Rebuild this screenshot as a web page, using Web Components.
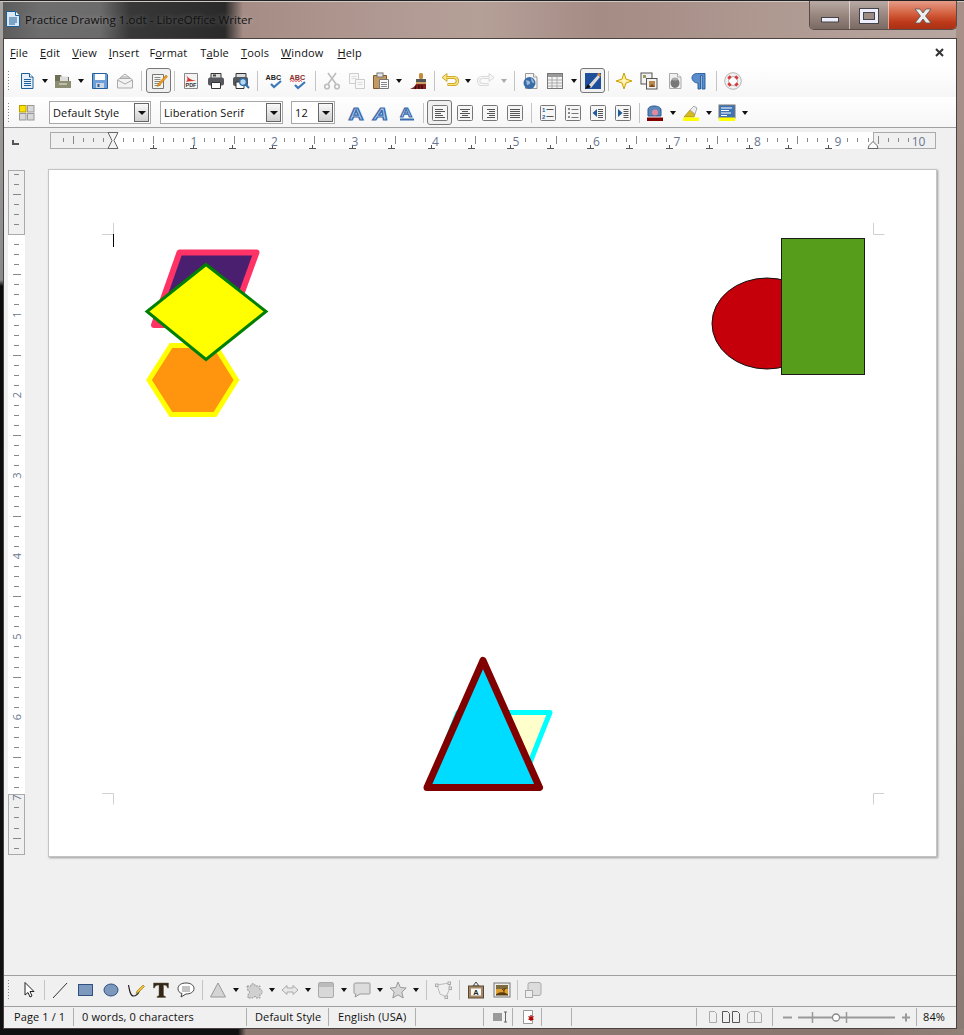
<!DOCTYPE html>
<html>
<head>
<meta charset="utf-8">
<title>Practice Drawing 1.odt - LibreOffice Writer</title>
<style>
  html, body { margin: 0; padding: 0; }
  body { font-family: "Open Sans", "Liberation Sans", sans-serif; }
</style>
</head>
<body>
<app-window title-text="Practice Drawing 1.odt - LibreOffice Writer">
  <menu-bar>
    <span><u>F</u>ile</span><span><u>E</u>dit</span><span><u>V</u>iew</span><span><u>I</u>nsert</span><span>F<u>o</u>rmat</span><span>T<u>a</u>ble</span><span><u>T</u>ools</span><span><u>W</u>indow</span><span><u>H</u>elp</span>
  </menu-bar>
  <tool-bar style="height:31px;padding-bottom:2px">
    <tool-btn icon="new" w="24"></tool-btn><tool-arrow></tool-arrow>
    <tool-btn icon="open" w="24"></tool-btn><tool-arrow></tool-arrow>
    <tool-btn icon="save"></tool-btn><tool-btn icon="mail"></tool-btn>
    <tool-sep w="9"></tool-sep>
    <tool-btn icon="edit" on></tool-btn>
    <tool-sep w="7"></tool-sep>
    <tool-btn icon="pdf"></tool-btn><tool-btn icon="print"></tool-btn><tool-btn icon="preview"></tool-btn>
    <tool-sep w="9"></tool-sep>
    <tool-btn icon="spell" w="24"></tool-btn><tool-btn icon="spell2" w="24"></tool-btn>
    <tool-sep w="10"></tool-sep>
    <tool-btn icon="cut" w="24"></tool-btn><tool-btn icon="copy"></tool-btn><tool-btn icon="paste" w="24"></tool-btn><tool-arrow></tool-arrow>
    <tool-btn icon="brush"></tool-btn>
    <tool-sep w="8"></tool-sep>
    <tool-btn icon="undo" w="24"></tool-btn><tool-arrow></tool-arrow>
    <tool-btn icon="redo" w="24"></tool-btn><tool-arrow off></tool-arrow>
    <tool-sep w="9"></tool-sep>
    <tool-btn icon="globe" w="24"></tool-btn><tool-btn icon="table" w="24"></tool-btn><tool-arrow w="13"></tool-arrow>
    <tool-btn icon="draw" on></tool-btn>
    <tool-sep w="7"></tool-sep>
    <tool-btn icon="star4" w="24"></tool-btn><tool-btn icon="nav" w="26"></tool-btn><tool-btn icon="gallery"></tool-btn><tool-btn icon="pilcrow" w="24"></tool-btn>
    <tool-sep w="10"></tool-sep>
    <tool-btn icon="help" w="24"></tool-btn>
  </tool-bar>
  <tool-bar style="height:30px;padding-top:1px">
    <tool-btn icon="styles" w="24"></tool-btn>
    <font-combo w="102" style="margin:0 9px 0 10px">Default Style</font-combo>
    <font-combo w="123" style="margin-right:8px">Liberation Serif</font-combo>
    <font-combo w="44" style="margin-right:10px">12</font-combo>
    <tool-btn icon="bold" w="24"></tool-btn><tool-btn icon="italic"></tool-btn><tool-btn icon="under"></tool-btn>
    <tool-sep w="8"></tool-sep>
    <tool-btn icon="alignl" on></tool-btn><tool-btn icon="alignc"></tool-btn><tool-btn icon="alignr"></tool-btn><tool-btn icon="alignj"></tool-btn>
    <tool-sep w="8"></tool-sep>
    <tool-btn icon="numbered"></tool-btn><tool-btn icon="bullets"></tool-btn><tool-btn icon="outdent"></tool-btn><tool-btn icon="indent"></tool-btn>
    <tool-sep w="8"></tool-sep>
    <tool-btn icon="fontcolor" w="24"></tool-btn><tool-arrow></tool-arrow>
    <tool-btn icon="highlight" w="24"></tool-btn><tool-arrow></tool-arrow>
    <tool-btn icon="parabg" w="24"></tool-btn><tool-arrow></tool-arrow>
  </tool-bar>
  <ruler-row></ruler-row>
  <doc-area>
    <v-ruler></v-ruler>
    <doc-page></doc-page>
  </doc-area>
  <tool-bar style="height:31px;padding-bottom:2px;background:#f0f0f0;border-bottom:1px solid #a0a0a0">
    <tool-btn icon="select" w="27"></tool-btn>
    <tool-sep w="5"></tool-sep>
    <tool-btn icon="line" w="26"></tool-btn><tool-btn icon="rect"></tool-btn><tool-btn icon="ellipse"></tool-btn><tool-btn icon="curve"></tool-btn><tool-btn icon="textT"></tool-btn><tool-btn icon="note"></tool-btn>
    <tool-sep w="8"></tool-sep>
    <tool-btn icon="tri" w="23"></tool-btn><tool-arrow w="13"></tool-arrow>
    <tool-btn icon="puzzle" w="23"></tool-btn><tool-arrow w="13"></tool-arrow>
    <tool-btn icon="dblarrow" w="24"></tool-btn><tool-arrow></tool-arrow>
    <tool-btn icon="flow" w="24"></tool-btn><tool-arrow></tool-arrow>
    <tool-btn icon="bubble" w="24"></tool-btn><tool-arrow></tool-arrow>
    <tool-btn icon="star5" w="23"></tool-btn><tool-arrow w="13"></tool-arrow>
    <tool-sep w="8"></tool-sep>
    <tool-btn icon="points" w="26"></tool-btn>
    <tool-sep w="6"></tool-sep>
    <tool-btn icon="fontwork" w="27"></tool-btn><tool-btn icon="image"></tool-btn>
    <tool-sep w="6"></tool-sep>
    <tool-btn icon="extrude" w="26"></tool-btn>
  </tool-bar>
  <status-bar>
    <status-cell w="70" pad="10">Page 1 / 1</status-cell>
    <status-cell w="173" pad="8">0 words, 0 characters</status-cell>
    <status-cell w="82" pad="8">Default Style</status-cell>
    <status-cell w="87" pad="9">English (USA)</status-cell>
    <status-cell w="68"></status-cell>
    <status-cell w="29" pad="9"><tool-glyph icon="sel"></tool-glyph></status-cell>
    <status-cell w="29" pad="9"><tool-glyph icon="docstar"></tool-glyph></status-cell>
    <status-cell w="30"></status-cell>
    <status-cell w="125"></status-cell>
    <status-cell w="76" pad="11"><tool-glyph icon="views" size="58"></tool-glyph></status-cell>
    <status-cell w="144" pad="9"><zoom-slider></zoom-slider></status-cell>
    <status-cell pad="6" last>84%</status-cell>
  </status-bar>
</app-window>

<script>
// small drawings for the toolbar buttons, all on an 18x18 box
const page = (f, s) => `<path d="M3.5 1.5h8l3.5 3.5v11.5h-11.5z" fill="${f}" stroke="${s}"/><path d="M11.5 1.5v3.5h3.5" fill="#fff" stroke="${s}"/>`
const lines = (x, w, ys, c) => ys.map(y => `<path d="M${x} ${y}h${w}" stroke="${c}"/>`).join('')
const framed = inner => `<rect x="1.5" y="1.5" width="15" height="15" rx="1" fill="#f6f6f6" stroke="#777"/>${inner}`
const svgText = (t, x, y, size, fill, extra = '') => `<text x="${x}" y="${y}" font-family="Liberation Sans, sans-serif" font-size="${size}" font-weight="700" fill="${fill}" ${extra}>${t}</text>`
const bentArrow = (edge, body) => `<path d="M6 5.500h7c4.500 0 4.500 7 0 7H6.500" fill="none" stroke="${edge}" stroke-width="3.200"/><path d="M6 1.500L1 5.500l5 4z" fill="${body}" stroke="${edge}" stroke-width=".8"/><path d="M6 5.500h7c4.500 0 4.500 7 0 7H7" fill="none" stroke="${body}" stroke-width="1.600"/>`

const ICONS = {
  new: page('#e6f0fa', '#1c5f98') + lines(6, 7, [7.5, 9.5, 11.5, 13.5], '#1c5f98'),
  open: '<path d="M1 3h6l1 2h7v4H1z" fill="#6f6f58"/><path d="M1 9h16v7H1z" fill="#8d8d74"/><path d="M6 4.500h8v4.500H6z" fill="#ddd"/><path d="M5 11h8v2H5z" fill="#bdbda8"/>',
  save: '<path d="M1.5 1.5h14l1 1v14h-15z" fill="#6f9fd8" stroke="#26609c"/><path d="M4 2h10v6H4z" fill="#fff"/><path d="M5 11h8v5H5z" fill="#cfd8e2"/><path d="M6.5 12h2v3h-2z" fill="#26609c"/>',
  mail: '<path d="M1.5 8L9 2l7.5 6v8h-15z" fill="#f2f2f2" stroke="#aaa"/><path d="M1.5 8L9 12l7.5-4M4 6.5h10M5 5h8" fill="none" stroke="#aaa"/>',
  edit: '<path d="M2.5 2.5h11v14h-11z" fill="#f4f4ee" stroke="#777"/>' + lines(4.5, 6, [5.5, 7.5, 9.5, 11.5, 13.5], '#888') + '<path d="M8 12l8-9 1.5 1.5-8 9-2.5 1z" fill="#f09a1a" stroke="#b06c00" stroke-width=".5"/>',
  pdf: '<path d="M2.5 1.5h13v15h-13z" fill="#f4f4f4" stroke="#888"/><path d="M4 3c3 4 6 5 10 6-4 0-7 0-10 1 2-2 2-4 0-7z" fill="#d9362a"/>' + svgText('PDF', 3.6, 15, 5.4, '#333'),
  print: '<path d="M4 1.5h10v5H4z" fill="#ddd" stroke="#333"/><rect x="1" y="5.5" width="16" height="8" rx="2" fill="#55585c"/><path d="M4.500 10.500h9v6h-9z" fill="#fff" stroke="#333"/><path d="M6 2.500h3v2H6z" fill="#444"/>',
  preview: '<path d="M4 1.500h10v5H4z" fill="#ddd" stroke="#333"/><rect x="1" y="5" width="15" height="9" rx="2" fill="#55585c"/><path d="M4 10h8v6.500H4z" fill="#fff" stroke="#333"/><circle cx="11" cy="10" r="3.300" fill="#b8d8f2" stroke="#2a70b0" stroke-width="1.300"/><path d="M13.500 12.500l3.500 3.500" stroke="#2a70b0" stroke-width="2"/>',
  spell: svgText('ABC', 0.5, 7.5, 7.2, '#222') + '<path d="M6 12l3 3 7-6" fill="none" stroke="#3c78b8" stroke-width="2.200"/>',
  spell2: svgText('ABC', 0.5, 7.5, 7.2, '#8a2a2a') + '<path d="M1 9.500l1.500-1 1.500 1 1.500-1 1.500 1 1.500-1 1.500 1 1.500-1 1.500 1" fill="none" stroke="#c22"  stroke-width=".8"/><path d="M6 13l3 3 7-6" fill="none" stroke="#3c78b8" stroke-width="2.200"/>',
  cut: '<g fill="none" stroke="#bdbdbd" stroke-width="1.600"><path d="M5 1l8 11M13 1L5 12"/><circle cx="4" cy="14.500" r="2.300"/><circle cx="14" cy="14.500" r="2.300"/></g>',
  copy: '<path d="M1.500 1.500h9v10h-9z" fill="#f8f8f8" stroke="#ccc"/><path d="M7.500 7.500h9v9h-9z" fill="#f8f8f8" stroke="#ccc"/>' + lines(3.500, 5, [4.500, 6.500], '#ddd') + lines(9.500, 5, [10.500, 12.500], '#ddd'),
  paste: '<path d="M1.500 3.500h13v13h-13z" fill="#c49a63" stroke="#80592a"/><rect x="5" y="1" width="6" height="4" fill="#e6e6e6" stroke="#777"/><path d="M7.500 7.500h9v9h-9z" fill="#fafafa" stroke="#777"/>' + lines(9, 6, [10.500, 12.500, 14.500], '#888'),
  brush: '<rect x="10" y="1" width="4" height="6" rx="1.500" fill="#c48a38"/><path d="M7 7h10v3H7z" fill="#555"/><path d="M7 10h10v2H7z" fill="#c9a066"/><path d="M1 17c3-1 5-3 6-5h10v5z" fill="#8c1e1e"/><path d="M7 14l-1 3M10 13v4M13 13v4" stroke="#111" stroke-width="1.200"/>',
  undo: bentArrow('#c09a10', '#fbe27a'),
  redo: `<g transform="translate(18 0) scale(-1 1)">${bentArrow('#cfcfcf', '#f8f8f8')}</g>`,
  globe: page('#f6f6f6', '#999') + '<circle cx="7.500" cy="11" r="6" fill="#3a6ea8"/><path d="M4 8c2 1 3 0 4 2s-2 3-3 3zM9 6c2 1 3 3 3 5-2 0-3-2-3-5z" fill="#9db9d8"/>',
  table: '<rect x="1.500" y="1.500" width="15" height="15" fill="#f4f4f4" stroke="#777"/><path d="M2 2h14v3H2z" fill="#9a9a9a"/><path d="M2 8h14M2 11h14M2 14h14M6 5v11M11 5v11" stroke="#aaa"/>',
  draw: '<rect x="1" y="1" width="16" height="16" fill="#1e4f9a"/><path d="M4 14L14 3l2 2L7 16z" fill="#dcdcdc"/><path d="M13 2l3 3 1-2-2-2z" fill="#d98a30"/><path d="M1 17l3-5 3 3z" fill="#111"/>',
  star4: '<path d="M9 1l2 6 6 2-6 2-2 6-2-6-6-2 6-2z" fill="#fbe690" stroke="#d0a400"/><path d="M9 5l1 3 3 1-3 1-1 3-1-3-3-1 3-1z" fill="#fff6c8"/>',
  nav: '<rect x="1" y="1" width="11" height="11" fill="#f2f2f2" stroke="#555"/><rect x="3" y="3" width="3" height="3" fill="#9a9a60"/><rect x="6.500" y="6.500" width="10.500" height="10.500" fill="#f2f2f2" stroke="#555"/><rect x="9" y="9" width="6" height="6" fill="#b88a50"/><path d="M9 15l3-3 3 3z" fill="#7c4a20"/>',
  gallery: page('#f0f0f0', '#aaa') + '<ellipse cx="9" cy="11" rx="4.500" ry="5" fill="#777"/><ellipse cx="9" cy="7" rx="3" ry="1.500" fill="#aaa"/>',
  pilcrow: '<path d="M15 1.500H7.500C3 1.500 2 4 2 6s2 5 6 5v6h2.500V3.500H12V17h3z" fill="#5b8ccb" stroke="#1f5a9c" stroke-width=".9"/>',
  help: '<circle cx="9" cy="9" r="6.500" fill="none" stroke="#f2f2f2" stroke-width="4"/><circle cx="9" cy="9" r="8.300" fill="none" stroke="#999" stroke-width=".7"/><circle cx="9" cy="9" r="4.500" fill="#fff" stroke="#999" stroke-width=".7"/><g stroke="#d83a3a" stroke-width="3.500"><path d="M4.500 4.500l2 2M13.500 4.500l-2 2M4.500 13.500l2-2M13.500 13.500l-2-2"/></g>',
  styles: '<rect x="1.500" y="1.500" width="6.500" height="6.500" fill="#fbe000" stroke="#b89c00"/><rect x="9.500" y="1.500" width="6.500" height="6.500" fill="#d8d8d8" stroke="#999"/><rect x="1.500" y="9.500" width="6.500" height="6.500" fill="#d8d8d8" stroke="#999"/><rect x="9.500" y="9.500" width="6.500" height="6.500" fill="#d8d8d8" stroke="#999"/>',
  bold: svgText('A', 0, 0, 16, '#b8cfec', 'stroke="#3a6cb0" stroke-width="1.200" transform="translate(0.500 15.500) scale(1.300 1)"'),
  italic: svgText('A', 0, 0, 16, '#b8cfec', 'stroke="#3a6cb0" stroke-width="1.200" font-style="italic" transform="translate(0 15.500) scale(1.300 1)"'),
  under: svgText('A', 0, 0, 13, '#f2f6fb', 'stroke="#3a6cb0" stroke-width="1" transform="translate(2 12.500) scale(1.300 1)"') + '<path d="M2 15.500h14" stroke="#3a6cb0" stroke-width="2"/>',
  alignl: framed(lines(4, 8, [5.500, 11.500], '#555') + lines(4, 10, [7.500, 13.500], '#555') + lines(4, 6, [9.500], '#555')),
  alignc: framed(lines(4, 10, [5.500, 9.500, 13.500], '#555') + lines(6, 6, [7.500, 11.500], '#555')),
  alignr: framed(lines(6, 8, [5.500, 9.500, 13.500], '#555') + lines(8, 6, [7.500, 11.500], '#555')),
  alignj: framed(lines(4, 10, [5.500, 7.500, 9.500, 11.500, 13.500], '#555')),
  numbered: framed(svgText('1', 3, 8, 6, '#2a5ea0') + svgText('2', 3, 14.500, 6, '#2a5ea0') + lines(7.500, 7, [5.500, 12.500], '#555')),
  bullets: framed('<path d="M4 4h2v2H4zM4 8h2v2H4zM4 12h2v2H4z" fill="#888"/>' + lines(7.500, 7, [5.500, 9.500, 13.500], '#777')),
  outdent: framed('<path d="M8 5v8L3.500 9z" fill="#1f5a9c"/>' + lines(9, 5, [5.500, 7.500, 9.500, 11.500, 13.500], '#555')),
  indent: framed('<path d="M4 5v8l4.500-4z" fill="#1f5a9c"/>' + lines(9.500, 5, [5.500, 7.500, 9.500, 11.500, 13.500], '#555')),
  fontcolor: '<path d="M2 12V6c0-3 3-4 6-4s7 1 7 4v6z" fill="#5c86b8" stroke="#2a5a94"/><circle cx="9" cy="8.500" r="3" fill="#e08aa0"/><path d="M1 13.500h16V17H1z" fill="#800000"/>',
  highlight: '<path d="M2 13l6-7 5 4-1 3z" fill="#d8b820" stroke="#a88c00" stroke-width=".7"/><path d="M8 6l4-4 3 2-2 6z" fill="#eee" stroke="#aaa"/><path d="M1 13.500h16V17H1z" fill="#ffff00"/>',
  parabg: '<rect x="1" y="1" width="16" height="13" fill="#3f74b4" stroke="#777"/><path d="M3 4h11M3 6.500h8M3 9h10M3 11.500h6" stroke="#fff"/><path d="M1 13.500h16V17H1z" fill="#ffff00"/>',
  select: '<path d="M5 1.500v12.500l3-2.500 2 4.500 2-1-2-4.500h4z" fill="#fff" stroke="#222"/>',
  line: '<path d="M2 17L16 2" stroke="#333"/>',
  rect: '<rect x="1.500" y="3.500" width="14" height="11" fill="#7c98bd" stroke="#2f5080"/>',
  ellipse: '<ellipse cx="9" cy="9" rx="7" ry="6" fill="#7c98bd" stroke="#2f5080"/>',
  curve: '<path d="M1.500 4c1 6 2 11 5 11s5-3 6-5" fill="none" stroke="#222" stroke-width="1.200"/><path d="M10 10l6-6 1.500 1.500-6 6-2.500 1z" fill="#f0c030" stroke="#7a5a00" stroke-width=".5"/>',
  textT: '<path d="M1.500 2h15v5h-1c-.5-2-1-3-4-3v10c0 1 1 1 2 1.500v1H5v-1c1-.5 2-.5 2-1.500V4C4 4 3 5 2.500 7h-1z" fill="#30261a" stroke="#6b5a34" stroke-width=".5"/>',
  note: '<path d="M9 2c4.500 0 8 2 8 5.500S13.500 13 9 13l-5 3 1-3.500C2.500 12 1 10 1 7.500 1 4 4.500 2 9 2z" fill="#fff" stroke="#444"/>' + lines(5, 8, [6, 8, 10], '#888'),
  tri: '<path d="M9 2l7.500 14h-15z" fill="#d4d4d4" stroke="#999"/>',
  puzzle: '<path d="M2 5h4c-1-3 5-3 4 0h5v4c3-1 3 5 0 4v4h-4c1-2-3-2-3 0H3v-4c2 1 2-4 0-3z" fill="#d0d0d0" stroke="#999" stroke-dasharray="2 1"/>',
  dblarrow: '<path d="M1 9l5-4.500V7h6V4.500L17 9l-5 4.500V11H6v2.500z" fill="#e8e8e8" stroke="#aaa"/>',
  flow: '<rect x="1.500" y="1.500" width="15" height="15" rx="1.500" fill="#d8d8d8" stroke="#aaa"/><path d="M2 2h14v4H2z" fill="#bbb"/>',
  bubble: '<path d="M3 2h13c1 0 1 .5 1 1v9c0 1-.5 1-1 1H7l-5 3 1-3c-1 0-2-.5-2-1V3c0-.5 1-1 2-1z" fill="#dcdcdc" stroke="#999"/>',
  star5: '<path d="M9 1l2.400 5.500 5.800.5-4.400 4 1.400 6L9 13.800 3.800 17l1.400-6L1 7l5.800-.5z" fill="#d8d8d8" stroke="#999"/>',
  points: '<path d="M3 4l12-2 1 5-4 9-6-3z" fill="none" stroke="#bbb"/><g fill="#f0f0f0" stroke="#aaa"><rect x="1.500" y="3" width="2.500" height="2.500"/><rect x="14" y="1" width="2.500" height="2.500"/><rect x="15" y="6" width="2.500" height="2.500"/><rect x="11" y="15" width="2.500" height="2.500"/></g>',
  fontwork: '<path d="M9 1L6 5h6z" fill="none" stroke="#444"/><rect x="1.500" y="5" width="15" height="12" fill="#a48a68" stroke="#5a4630"/><rect x="4" y="7.500" width="10" height="7" fill="#f8f8f8"/>' + svgText('A', 6.200, 13.800, 7.500, '#222'),
  image: '<rect x="1" y="2" width="16" height="14" fill="#eee" stroke="#777"/><path d="M3 4h12v10H3z" fill="#e0a030"/><path d="M3 4h12v4H3z" fill="#554" opacity=".7"/><path d="M3 14c3-3 8-3 12 0zM11 14V7M11 9l2-2M11 10L9 8" stroke="#5a3a10" fill="#5a3a10"/>',
  extrude: '<rect x="4" y="1.500" width="13" height="13" rx="2" fill="#dcdcdc" stroke="#aaa"/><rect x="1.500" y="9.500" width="7" height="7" fill="#eee" stroke="#aaa"/>',
  sel: '<path d="M0 5h9v8H0z" fill="#9a9a9a"/><path d="M11 4h3M11 14h3M12.500 4v10" stroke="#666"/>',
  docstar: '<path d="M1.500 2.500h9v13h-9z" fill="#fff" stroke="#999"/><path d="M9 7v6M6.500 8.500l5 3M11.500 8.500l-5 3" stroke="#b00000" stroke-width="1.300"/>',
  views: '<g fill="none" stroke-width="1"><path d="M1.500 3.500h5l2 2v9h-7z" stroke="#aaa"/><path d="M14.500 3.500h5l2 2v9h-7z" stroke="#555"/><path d="M24.500 3.500h5l2 2v9h-7z" stroke="#555"/><path d="M39.500 5.500l3-2h4v11h-7zM46.500 3.500h4l3 2v9h-7z" stroke="#aaa"/></g>'
}

const swatch = (name, size) => `<svg width="${size}" height="18" viewBox="0 0 ${size} 18" style="display:block">${ICONS[name] || ''}</svg>`

const shapeEl = (tag, css, build) => {
  customElements.define(tag, class extends HTMLElement {
    constructor() {
      super()
      this.attachShadow({ mode: 'open' })
    }
    connectedCallback() {
      this.shadowRoot.innerHTML = `<style>${css}</style>${build(this)}`
    }
  })
}

shapeEl('app-window', `
  :host {
    display: block; position: relative; height: 1035px; width: 964px; overflow: hidden; box-sizing: border-box;
    padding: 38px 7px 6px 3px;
    background:
      linear-gradient(#222 0 1px, #cfc8c4 1px 2px, transparent 2px) top/100% 3px no-repeat,
      linear-gradient(90deg, #111 0 238px, #8b7770 246px 870px, #8f8078 100%) bottom/100% 6px no-repeat,
      linear-gradient(#a8a4a2 0, #8a8a8a 280px, #0c0c0c 286px, #101010 100%) left/3px 100% no-repeat,
      linear-gradient(#a89088, #9b8c86 40%, #8a7a74) right/8px 100% no-repeat,
      linear-gradient(90deg, #5a5a5a 0, #6e6e6e 40px, #6b6b6b 100px, #383838 130px, #2a2a2a 225px, #a58d86 243px, #ad958e 330px, #b5a098 480px, #a58c85 600px, #ae9890 760px, #b8a8a2 964px);
  }
  .title { position: absolute; left: 0; right: 0; top: 0; height: 38px; display: flex; align-items: flex-start; }
  .title svg.doc { margin: 10px 4px 0 5px; }
  .name { margin-top: 11px; font-size: 11.6px; line-height: 18px; color: #111; text-shadow: 0 0 6px rgba(255,255,255,.35); white-space: nowrap; }
  .caption { margin: 1px 7px 0 auto; display: flex; height: 28px; border: 1px solid #5a4c48; border-top: 0; border-radius: 0 0 5px 5px; overflow: hidden; }
  .caption div { display: flex; align-items: center; justify-content: center; border-left: 1px solid rgba(255,255,255,.55); background: linear-gradient(#b9aaa5, #98877f 50%, #7a6a64); }
  .caption div:first-child { border-left: 0; align-items: flex-end; padding-bottom: 6px; box-sizing: border-box; }
  .caption svg { margin-top: 2px; }
  .caption .close { background: linear-gradient(#e59c88, #d3603f 45%, #bd3a1a 75%, #a93015); }
  .body { height: 100%; display: flex; flex-direction: column; box-sizing: border-box; background: #f0f0f0; border: 1px solid #4a4240; }
`, el => `
  <div class="title">
    <svg class="doc" width="16" height="18" viewBox="0 0 16 18"><path d="M1.500 1.500h9l4 4v11h-13z" fill="#dbe9f6" stroke="#1c5f98"/><path d="M10.500 1.500v4h4" fill="#fff" stroke="#1c5f98"/><path d="M4 8h8M4 10h8M4 12h8M4 14h6" stroke="#1c5f98"/></svg>
    <div class="name">${el.getAttribute('title-text')}</div>
    <div class="caption">
      <div style="width:39px"><svg width="18" height="6"><rect x=".5" y=".5" width="17" height="4.500" fill="#eef" stroke="#444"/></svg></div>
      <div style="width:38px"><svg width="20" height="16"><rect x=".5" y=".5" width="19" height="15" fill="#eef" stroke="#444"/><rect x="4.500" y="4.500" width="11" height="7" fill="#9a8a84" stroke="#444"/></svg></div>
      <div class="close" style="width:67px"><svg width="18" height="16"><path d="M1 1h5l3 4 3-4h5l-5.500 7 5.500 7h-5l-3-4-3 4H1l5.500-7z" fill="#eee" stroke="#555" stroke-width=".8"/></svg></div>
    </div>
  </div>
  <div class="body"><slot></slot></div>
`)

shapeEl('menu-bar', `
  :host { display: flex; align-items: center; height: 27px; box-sizing: border-box; padding: 0 6px 1px 6px; flex: none; font-size: 11px; color: #111; background: #fff; letter-spacing: .15px; position: relative; }
  ::slotted(span) { margin-right: 12px; }
  ::slotted(span:nth-child(4)) { margin-right: 10px; }
  ::slotted(span:nth-child(5)) { margin-right: 13px; }
  ::slotted(span:nth-child(8)) { margin-right: 14px; }
  .x { margin-left: auto; margin-right: 6px; }
`, () => `<slot></slot><svg class="x" width="9" height="9"><path d="M1 1l7 7M8 1L1 8" stroke="#333" stroke-width="2"/></svg>`)

shapeEl('tool-bar', `
  :host { display: flex; align-items: center; flex: none; background: linear-gradient(#fff, #f6f6f6); box-sizing: border-box; }
  .grip { width: 11px; height: 22px; flex: none; background: radial-gradient(circle, #888 .7px, transparent 1px) 3px 0/3px 3px repeat-y; }
`, () => `<div class="grip"></div><slot></slot>`)

shapeEl('tool-btn', `
  :host { display: flex; align-items: center; justify-content: center; flex: none; height: 25px; box-sizing: border-box; }
  :host([on]) { border: 1px solid #777; border-radius: 3px; background: #f0f0f0; box-shadow: inset 0 0 1px #fff; }
  svg { overflow: visible; }
`, el => {
  el.style.width = (el.getAttribute('w') || 25) + 'px'
  return swatch(el.getAttribute('icon'), 18)
})

shapeEl('tool-glyph', `:host { display: block; } svg { overflow: visible; }`, el => swatch(el.getAttribute('icon'), el.getAttribute('size') || 18))

shapeEl('tool-arrow', `
  :host { display: flex; align-items: center; justify-content: center; flex: none; }
  i { width: 0; height: 0; border: 3.5px solid transparent; border-top: 4px solid #111; border-bottom: 0; }
  :host([off]) i { border-top-color: #aaa; }
`, el => {
  el.style.width = (el.getAttribute('w') || 12) + 'px'
  return '<i></i>'
})

shapeEl('tool-sep', `
  :host { display: flex; justify-content: center; flex: none; height: 20px; }
  i { width: 1px; background: #c4c4c4; }
`, el => {
  el.style.width = el.getAttribute('w') + 'px'
  return '<i></i>'
})

shapeEl('font-combo', `
  :host { display: flex; flex: none; height: 23px; box-sizing: border-box; border: 1px solid #a8a8a8; background: #fff; font-size: 11px; color: #111; letter-spacing: .12px; }
  .txt { flex: 1; padding-left: 3px; line-height: 21px; white-space: nowrap; overflow: hidden; }
  .btn { width: 15px; margin: 1px; border: 1px solid #666; background: linear-gradient(#fafafa, #cfcfcf); display: flex; align-items: center; justify-content: center; box-sizing: border-box; }
  i { width: 0; height: 0; border: 4px solid transparent; border-top: 4px solid #111; border-bottom: 0; }
`, el => {
  el.style.width = el.getAttribute('w') + 'px'
  return `<div class="txt"><slot></slot></div><div class="btn"><i></i></div>`
})

shapeEl('ruler-row', `
  :host { display: block; flex: none; height: 24px; background: #f0f0f0; border-top: 1px solid #a0a0a0; box-sizing: border-box; }
  svg { display: block; }
`, () => {
  // zero of the ruler sits on the left page margin, 80.5px to the inch
  let t = ''
  for (let i = -6; i <= 80; i++) {
    const x = 109 + i * 10.06
    if (x < 50 || x > 930 || i % 8 === 0) continue
    const tall = i % 4 === 0
    t += `<path d="M${Math.round(x) + .5} ${tall ? 8 : 10}v${tall ? 8 : 4}" stroke="#888"/>`
  }
  let stops = ''
  for (let i = 0; i < 18; i++) {
    const x = Math.round(149 + i * 39.7)
    stops += `<path d="M${x - 3} 20.500h7M${x + .5} 17v3" stroke="#555"/>`
  }
  let nums = ''
  for (let i = 1; i <= 10; i++) {
    nums += `<text x="${109.500 + i * 80.500}" y="18" text-anchor="middle" font-family="Open Sans, sans-serif" font-size="12" fill="#6a7690">${i}</text>`
  }
  return `<svg width="953" height="23">
    <path d="M9 12v4h6" fill="none" stroke="#555" stroke-width="2"/>
    <rect x="46" y="4" width="886" height="17" fill="#fff"/>
    <rect x="46.500" y="4.500" width="63" height="16" fill="#f0f0f0" stroke="#aaa"/>
    <rect x="869.500" y="4.500" width="62" height="16" fill="#f0f0f0" stroke="#aaa"/>
    ${t}${stops}${nums}
    <path d="M104 4.500h10l-4 8 4 8h-10l4-8z" fill="#f4f4f4" stroke="#666"/>
    <path d="M864 20.500h10l-1-3-4-4-4 4z" fill="#fff" stroke="#666"/>
  </svg>`
})

shapeEl('doc-area', `
  :host { display: flex; align-items: flex-start; flex: 1; min-height: 0; padding: 18px 0 0 4px; background: #f0f0f0; border-bottom: 1px solid #a0a0a0; }
`, () => `<slot></slot>`)

shapeEl('v-ruler', `
  :host { display: block; flex: none; width: 18px; height: 686px; margin: 1px 22px 0 0; }
  svg { display: block; }
`, () => {
  let t = ''
  for (let i = -6; i <= 62; i++) {
    const y = 64 + i * 10.06
    if (y < 3 || y > 682 || i % 8 === 0) continue
    const tall = i % 4 === 0
    t += `<path d="M${tall ? 5 : 6} ${Math.round(y) + .5}h${tall ? 8 : 5}" stroke="#888"/>`
  }
  let nums = ''
  for (let i = 1; i <= 7; i++) {
    nums += `<text x="0" y="0" transform="translate(13 ${64 + i * 80.500}) rotate(-90)" text-anchor="middle" font-family="Open Sans, sans-serif" font-size="11" fill="#6a7690">${i}</text>`
  }
  return `<svg width="18" height="686">
    <rect x="0" y="0" width="17" height="685" fill="#fff"/>
    <rect x=".5" y=".5" width="16" height="64" fill="#f0f0f0" stroke="#aaa"/>
    <rect x=".5" y="624.500" width="16" height="60" fill="#f0f0f0" stroke="#aaa"/>
    ${t}${nums}
  </svg>`
})

shapeEl('doc-page', `
  :host { display: block; flex: none; width: 889px; height: 688px; box-sizing: border-box; background: #fff; border: 1px solid #c4c4c4; box-shadow: 1px 1px 2px #9a9a9a; }
  svg { display: block; }
`, () => `
  <svg width="887" height="686" viewBox="49 170 887 686">
    <g fill="none" stroke="#d0d0d0">
      <path d="M102 234.500h11.500M113.500 223v11.500"/>
      <path d="M873.500 223v11.500h11"/>
      <path d="M102 793.500h11.500v11"/>
      <path d="M884 793.500h-10.500v11"/>
    </g>
    <path d="M113.500 234v13" stroke="#000"/>

    <path d="M179.500 252.500h77L230 325h-76z" fill="#4b1f6f" stroke="#ff3366" stroke-width="6" stroke-linejoin="round"/>
    <path d="M171 345.500h44l21.500 34.500-21.500 34.500h-44l-22-34.500z" fill="#ff950e" stroke="#ffff00" stroke-width="5"/>
    <path d="M206 264.500l60 47-60 48-59-48z" fill="#ffff00" stroke="#008000" stroke-width="3"/>

    <ellipse cx="767" cy="323.500" rx="55" ry="45.500" fill="#c5000b" stroke="#111"/>
    <rect x="781.500" y="238.500" width="83" height="136" fill="#579d1c" stroke="#1a1a1a"/>

    <path d="M458 712.500h92l-30 75h-92z" fill="#ffffcc" stroke="#00ffff" stroke-width="5" stroke-linejoin="round"/>
    <path d="M483 660.500l56.500 127h-112.500z" fill="#00dcff" stroke="#800000" stroke-width="7" stroke-linejoin="round"/>
  </svg>
`)

shapeEl('status-bar', `
  :host { display: flex; flex: none; height: 21px; align-items: stretch; background: #f0f0f0; font-size: 11px; color: #111; letter-spacing: .12px; }
`, () => `<slot></slot>`)

shapeEl('status-cell', `
  :host { display: flex; align-items: center; flex: none; box-sizing: border-box; white-space: nowrap; position: relative; padding-bottom: 2px; }
  :host(:not([last]))::after { content: ''; position: absolute; right: 0; top: 1px; bottom: 2px; width: 1px; background: #b0b0b0; }
`, el => {
  if (el.getAttribute('w')) el.style.width = el.getAttribute('w') + 'px'
  el.style.paddingLeft = (el.getAttribute('pad') || 0) + 'px'
  return '<slot></slot>'
})

shapeEl('zoom-slider', `
  :host { display: block; }
  svg { display: block; }
`, () => `
  <svg width="128" height="14">
    <path d="M1 7.500h9M16 7.500h97M120 7.500h8M124 3.500v8" stroke="#999" stroke-width="2"/>
    <path d="M30.500 2v11M64.500 2v11" stroke="#999" stroke-width="1.500"/>
    <circle cx="54" cy="7.500" r="3.500" fill="#fff" stroke="#888" stroke-width="1.300"/>
  </svg>
`)
</script>
</body>
</html>
